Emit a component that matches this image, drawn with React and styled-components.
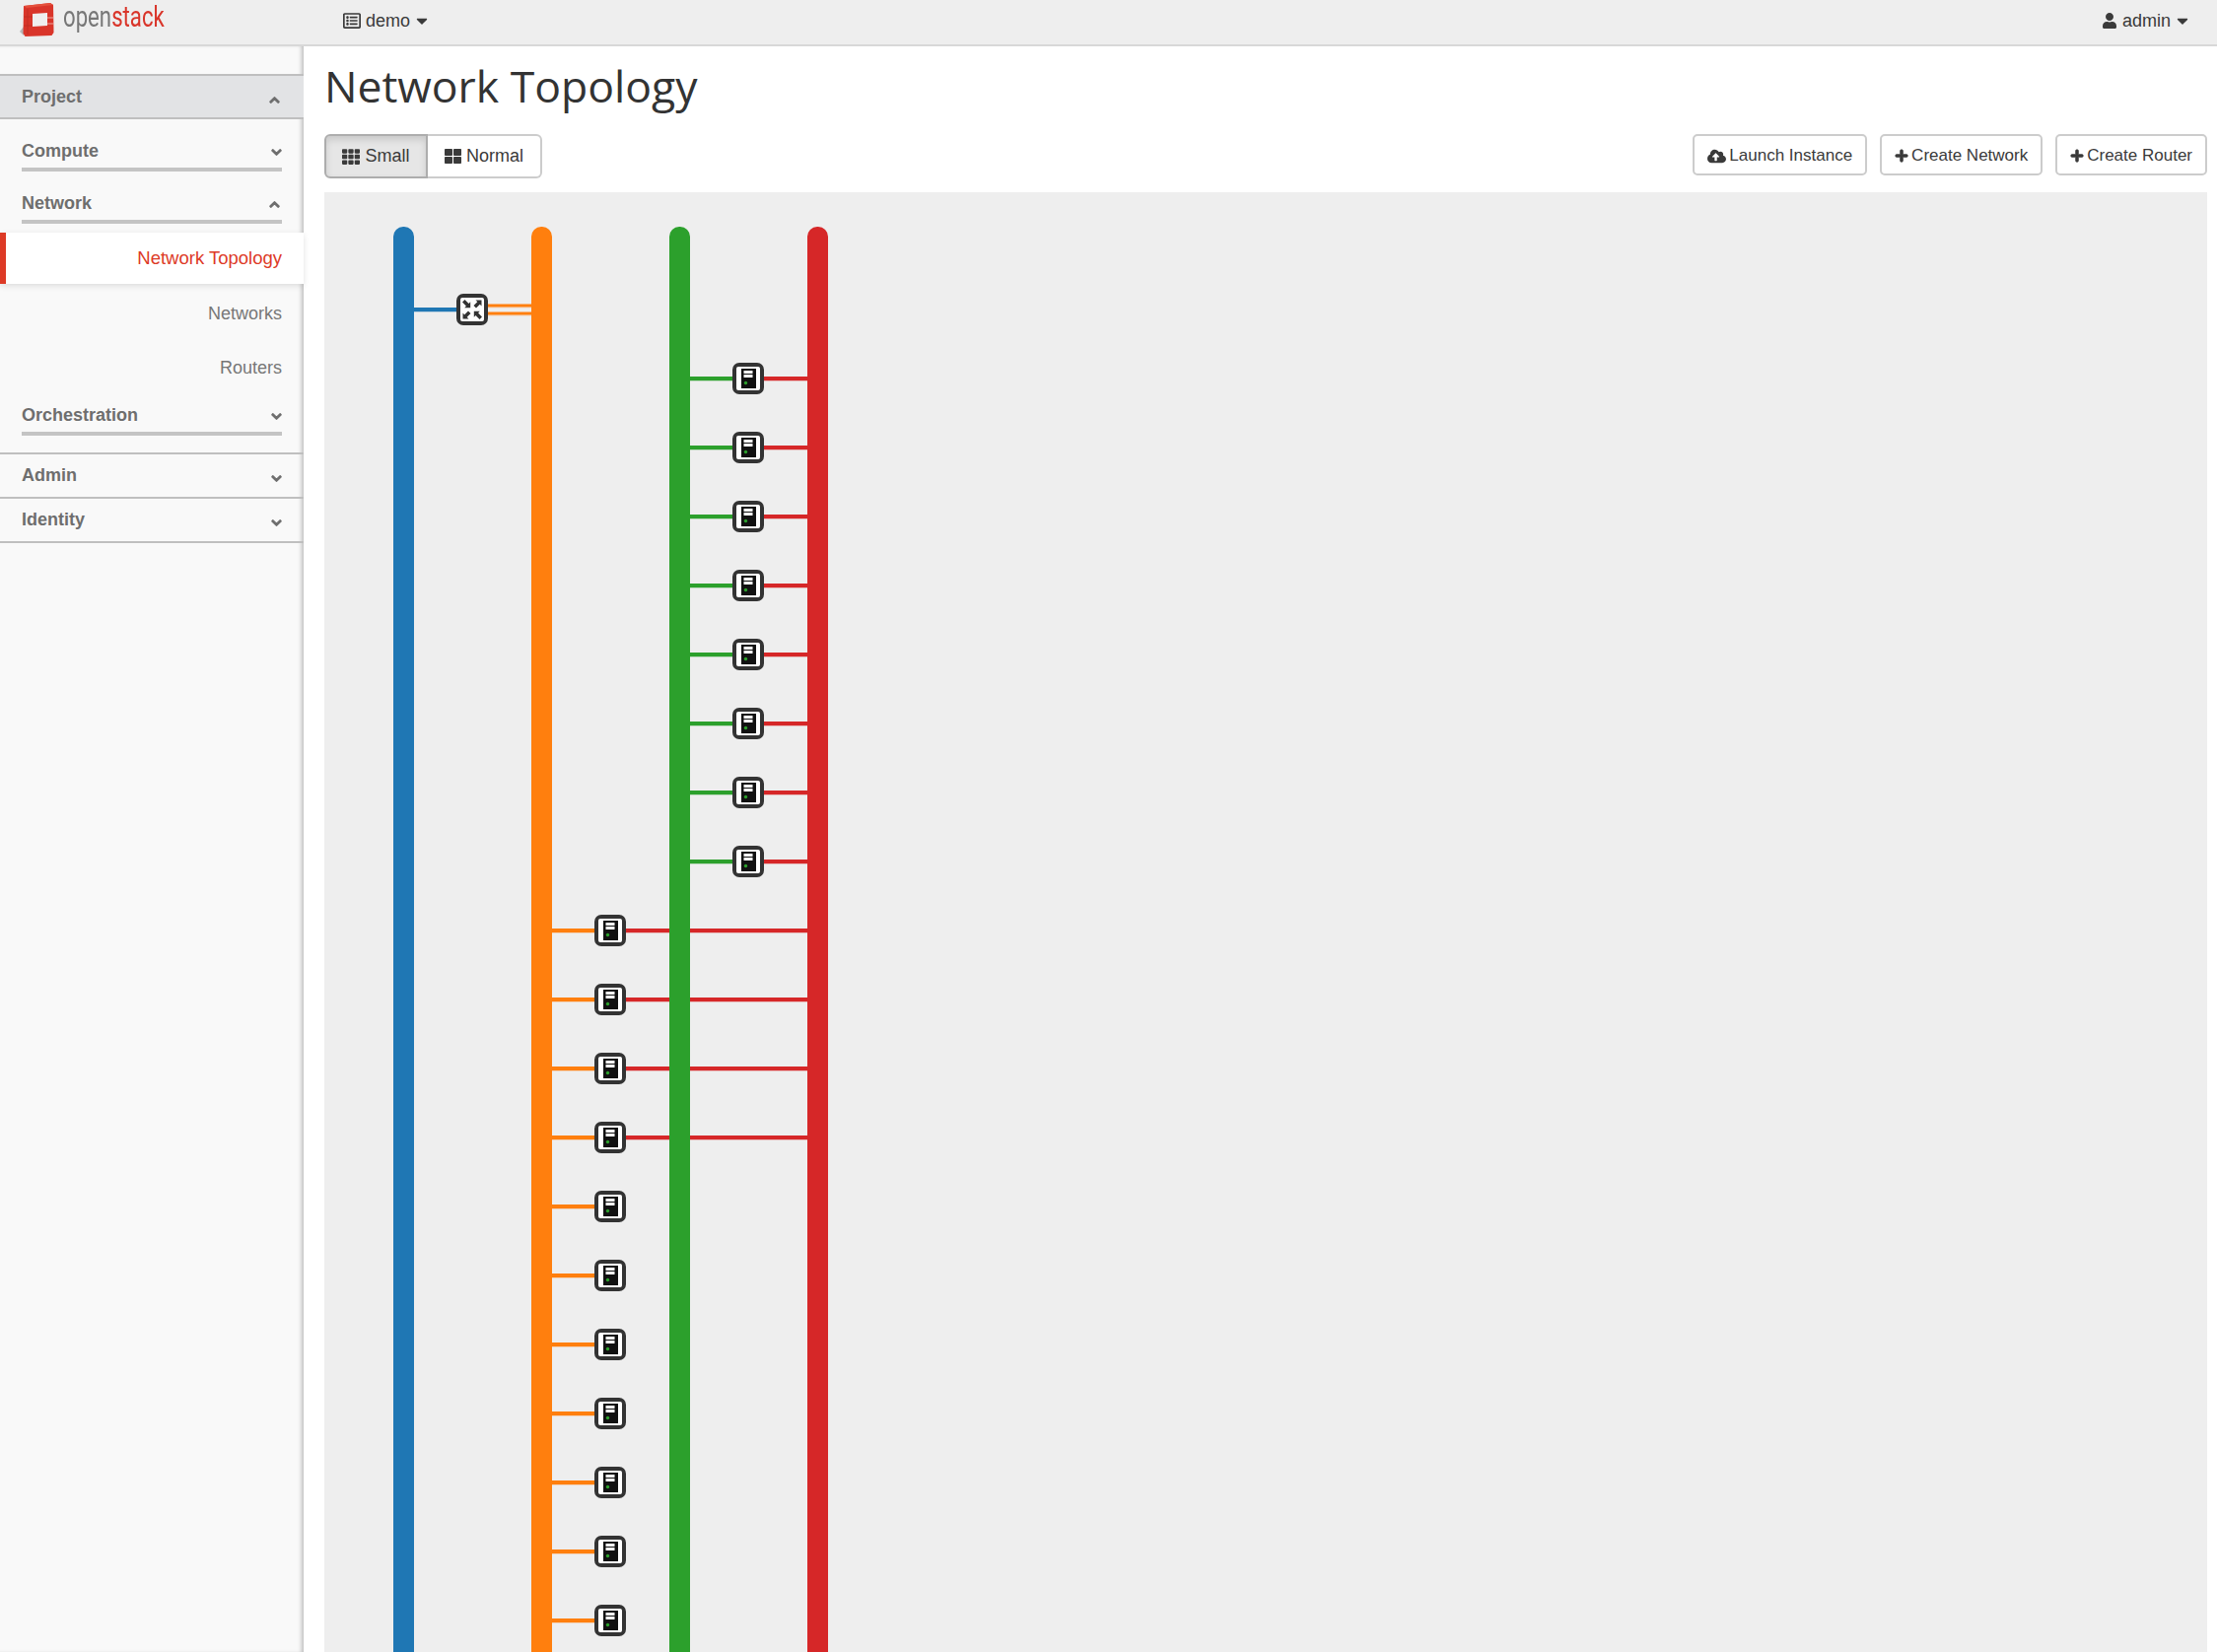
import React from 'react';
import styled, { createGlobalStyle } from 'styled-components';
import {
  FaCaretDown,
  FaChevronDown,
  FaChevronUp,
  FaCloudUploadAlt,
  FaRegListAlt,
  FaPlus,
  FaTh,
  FaThLarge,
  FaUser,
} from 'react-icons/fa';

const BLUE = '#1f77b4';
const ORANGE = '#ff7f0e';
const GREEN = '#2ca02c';
const RED = '#d62728';

const networks = [
  { x: 399, color: BLUE },
  { x: 539, color: ORANGE },
  { x: 679, color: GREEN },
  { x: 819, color: RED },
];

const greenServers = [384, 454, 524, 594, 664, 734, 804, 874];
const orangeServers = [944, 1014, 1084, 1154, 1224, 1294, 1364, 1434, 1504, 1574, 1644];

const Link = ({ x1, x2, y, color, width = 4 }) => (
  <g>
    <rect x={x1} y={y + width / 2} width={x2 - x1} height={1} fill={color} opacity="0.25" />
    <rect x={x1} y={y - width / 2} width={x2 - x1} height={width} fill={color} />
  </g>
);

const DeviceFrame = ({ cx, cy }) => (
  <g>
    <rect x={cx - 16} y={cy - 16} width={32} height={32} rx={7} fill="#333" />
    <rect x={cx - 12} y={cy - 12} width={24} height={24} rx={2} fill="#fff" />
  </g>
);

const Server = ({ cx, cy }) => (
  <g>
    <DeviceFrame cx={cx} cy={cy} />
    <rect x={cx - 7} y={cy - 10} width={15} height={20} fill="#111" />
    <rect x={cx - 4.5} y={cy - 8} width={9} height={3} fill="#fff" />
    <rect x={cx - 4.5} y={cy - 4} width={9} height={3} fill="#fff" />
    <circle cx={cx - 2.5} cy={cy + 4.5} r={1.7} fill={GREEN} />
  </g>
);

const Router = ({ cx, cy }) => (
  <g>
    <DeviceFrame cx={cx} cy={cy} />
    <g fill="#333" transform={`translate(${cx} ${cy})`}>
      <path d="M-10 -7.5l2.5-2.5 4 4 1.7-1.7v6h-6l1.7-1.7z" />
      <path d="M9.5 -9.5v6l-1.7-1.7-3.8 3.8-2.5-2.5 3.8-3.8-1.8-1.8z" />
      <path d="M-9.5 9.5v-6l1.7 1.7 3.8-3.8 2.5 2.5-3.8 3.8 1.8 1.8z" />
      <path d="M10 7.5l-2.5 2.5-4-4-1.7 1.7v-6h6l-1.7 1.7z" />
    </g>
  </g>
);

const Logo = () => (
  <LogoMark width="37" height="36" viewBox="0 0 37 36">
    <path d="M0 30l4-5v9z" fill="#888" opacity="0.55" />
    <path d="M4 4l27-3 3 2 .5 28-2 3-27 1-2-3z" fill="#d9352a" />
    <path d="M4 4l27-3 3 2-27 3z" fill="#e4503c" />
    <path d="M13 12l15-1v13l-15 1z" fill="#efefef" />
    <path d="M28 16h6M28 22h6" stroke="#f0a79d" strokeWidth="1" />
    <path d="M8 7v26M4 15h9M4 24h9" stroke="#b92a20" strokeWidth="1" opacity="0.7" />
  </LogoMark>
);

const App = () => (
  <Page>
    <GlobalStyle />
    <TopBar>
      <Brand>
        <Logo />
        <BrandText>
          open<BrandAccent>stack</BrandAccent>
        </BrandText>
      </Brand>
      <NavMenu>
        <FaRegListAlt size={18} />
        demo
        <Caret size={18} />
      </NavMenu>
      <UserMenu>
        <FaUser size={16} />
        admin
        <Caret size={18} />
      </UserMenu>
    </TopBar>
    <Body>
      <Sidebar>
        <Dashboard $open>
          Project
          <ChevronUp />
        </Dashboard>
        <Section>
          Compute
          <ChevronDown />
        </Section>
        <Section>
          Network
          <ChevronUp />
        </Section>
        <ActiveItem>Network Topology</ActiveItem>
        <SubList>
          <SubItem>Networks</SubItem>
          <SubItem>Routers</SubItem>
        </SubList>
        <Section $last>
          Orchestration
          <ChevronDown />
        </Section>
        <Dashboard $first>
          Admin
          <ChevronDown />
        </Dashboard>
        <Dashboard>
          Identity
          <ChevronDown />
        </Dashboard>
      </Sidebar>
      <Main>
        <Title>Network Topology</Title>
        <Toolbar>
          <ToggleGroup>
            <ToggleButton $active>
              <FaTh size={18} />
              Small
            </ToggleButton>
            <ToggleButton>
              <FaThLarge size={17} />
              Normal
            </ToggleButton>
          </ToggleGroup>
          <Actions>
            <ActionButton>
              <FaCloudUploadAlt size={19} />
              Launch Instance
            </ActionButton>
            <ActionButton>
              <BoldPlus />
              Create Network
            </ActionButton>
            <ActionButton>
              <BoldPlus />
              Create Router
            </ActionButton>
          </Actions>
        </Toolbar>
        <Canvas>
          <svg width="1910" height="1481" viewBox="329 195 1910 1481">
            {greenServers.map(y => (
              <g key={y}>
                <Link x1={700} x2={743} y={y} color={GREEN} />
                <Link x1={775} x2={819} y={y} color={RED} />
                <Server cx={759} cy={y} />
              </g>
            ))}
            {orangeServers.map((y, index) => (
              <g key={y}>
                <Link x1={560} x2={603} y={y} color={ORANGE} />
                {index < 4 && <Link x1={635} x2={819} y={y} color={RED} />}
                <Server cx={619} cy={y} />
              </g>
            ))}
            <Link x1={420} x2={463} y={314} color={BLUE} />
            <Link x1={495} x2={539} y={310} color={ORANGE} width={3} />
            <Link x1={495} x2={539} y={318} color={ORANGE} width={3} />
            <Router cx={479} cy={314} />
            {networks.map(net => (
              <rect key={net.x} x={net.x} y={230} width={21} height={1480} rx={10} fill={net.color} />
            ))}
          </svg>
        </Canvas>
      </Main>
    </Body>
  </Page>
);

const GlobalStyle = createGlobalStyle`
  html, body {
    margin: 0;
    padding: 0;
    background: #fff;
  }
  body {
    font-family: "Liberation Sans", Arial, sans-serif;
    font-size: 18px;
    color: #3a3a3a;
  }
`;

const Page = styled.div`
  width: 2249px;
  height: 1676px;
  overflow: hidden;
  display: flex;
  flex-direction: column;
`;

const TopBar = styled.header`
  height: 47px;
  box-sizing: border-box;
  flex-shrink: 0;
  display: flex;
  align-items: center;
  background: #eeeeee;
  border-bottom: 2px solid #d8d8d8;
  padding: 0 29px 3px 20px;
`;

const Brand = styled.div`
  display: flex;
  align-items: flex-start;
  gap: 7px;
  width: 328px;
  align-self: flex-start;
  filter: blur(0.4px);
`;

const LogoMark = styled.svg`
  margin-top: 2px;
  flex-shrink: 0;
`;

const BrandText = styled.span`
  font-family: Roboto, sans-serif;
  font-size: 29px;
  line-height: 34px;
  color: #777;
  display: inline-block;
  transform: scaleX(0.765);
  transform-origin: left center;
`;

const BrandAccent = styled.span`
  color: #d9352a;
`;

const NavMenu = styled.div`
  display: flex;
  align-items: center;
  gap: 5px;
`;

const UserMenu = styled(NavMenu)`
  margin-left: auto;
`;

const Caret = styled(FaCaretDown)`
  margin: 0 -3px 0 -2px;
`;

const Body = styled.div`
  flex: 1;
  display: flex;
  min-height: 0;
`;

const Sidebar = styled.nav`
  width: 308px;
  flex-shrink: 0;
  box-sizing: border-box;
  padding-top: 28px;
  background: #f9f9f9;
  box-shadow: inset -4px 0 4px -2px rgba(0, 0, 0, 0.25);
  color: #6e6e6e;
`;

const ChevronDown = styled(FaChevronDown)`
  width: 11px;
  height: 11px;
  stroke: currentColor;
  stroke-width: 50;
`;

const ChevronUp = styled(FaChevronUp)`
  width: 11px;
  height: 11px;
  margin-right: 2px;
  stroke: currentColor;
  stroke-width: 50;
`;

const Dashboard = styled.div`
  height: ${({ $open, $first }) => ($open ? 46 : $first ? 47 : 45)}px;
  box-sizing: border-box;
  display: flex;
  align-items: center;
  justify-content: space-between;
  padding: 0 22px;
  font-weight: bold;
  background: ${({ $open }) => ($open ? '#e2e3e5' : 'transparent')};
  border-top: ${({ $open, $first }) => ($open || $first ? '2px solid #bfbfbf' : 'none')};
  border-bottom: 2px solid #bfbfbf;

  svg {
    margin-top: 6px;
  }
`;

const Section = styled.div`
  margin: 0 22px ${({ $last }) => ($last ? 17 : 0)}px;
  height: ${({ $last }) => ($last ? 51 : 53)}px;
  box-sizing: border-box;
  padding-top: ${({ $last }) => ($last ? 18 : 20)}px;
  line-height: 24px;
  font-weight: bold;
  display: flex;
  justify-content: space-between;
  border-bottom: 4px solid #c4c4c4;

  svg {
    margin-top: 8px;
  }
`;

const ActiveItem = styled.div`
  margin-top: 9px;
  height: 52px;
  box-sizing: border-box;
  display: flex;
  align-items: center;
  justify-content: flex-end;
  padding-right: 22px;
  font-size: 18.5px;
  color: #dd3a26;
  background: #fff;
  border-left: 6px solid #dd3a26;
  box-shadow: 0 2px 6px rgba(0, 0, 0, 0.12);
  position: relative;
`;

const SubList = styled.div`
  display: flex;
  flex-direction: column;
  gap: 19px;
  padding-top: 12px;
`;

const SubItem = styled.div`
  height: 36px;
  line-height: 36px;
  text-align: right;
  padding-right: 22px;
  color: #777;
`;

const Main = styled.main`
  flex: 1;
  min-width: 0;
  box-sizing: border-box;
  padding: 0 10px 0 21px;
  display: flex;
  flex-direction: column;
`;

const Title = styled.h1`
  margin: 0;
  height: 89px;
  font-family: "Open Sans", sans-serif;
  font-weight: 400;
  font-size: 44.5px;
  line-height: 80px;
  color: #333;
`;

const Toolbar = styled.div`
  display: flex;
  justify-content: space-between;
  align-items: flex-start;
  height: 59px;
  flex-shrink: 0;
`;

const ToggleGroup = styled.div`
  display: flex;
  height: 45px;
`;

const ToggleButton = styled.div`
  box-sizing: border-box;
  height: 45px;
  width: ${({ $active }) => ($active ? 105 : 116)}px;
  display: flex;
  align-items: center;
  justify-content: center;
  gap: 5px;
  background: ${({ $active }) => ($active ? '#e6e6e6' : '#fff')};
  border: 2px solid ${({ $active }) => ($active ? '#adadad' : '#ccc')};
  border-left-width: ${({ $active }) => ($active ? 2 : 0)}px;
  border-radius: ${({ $active }) => ($active ? '6px 0 0 6px' : '0 6px 6px 0')};
  box-shadow: ${({ $active }) => ($active ? 'inset 0 4px 7px rgba(0, 0, 0, 0.125)' : 'none')};
`;

const Actions = styled.div`
  display: flex;
  gap: 13px;
`;

const ActionButton = styled.div`
  box-sizing: border-box;
  height: 42px;
  padding: 2px 13px 0;
  display: flex;
  align-items: center;
  gap: 3px;
  font-size: 17px;
  background: #fff;
  border: 2px solid #ccc;
  border-radius: 5px;
`;

const BoldPlus = styled(FaPlus)`
  width: 14px;
  height: 14px;
  stroke: currentColor;
  stroke-width: 30;
`;

const Canvas = styled.div`
  flex: 1;
  min-height: 0;
  overflow: hidden;
  background: #eeeeee;

  svg {
    display: block;
  }
`;

export default App;
